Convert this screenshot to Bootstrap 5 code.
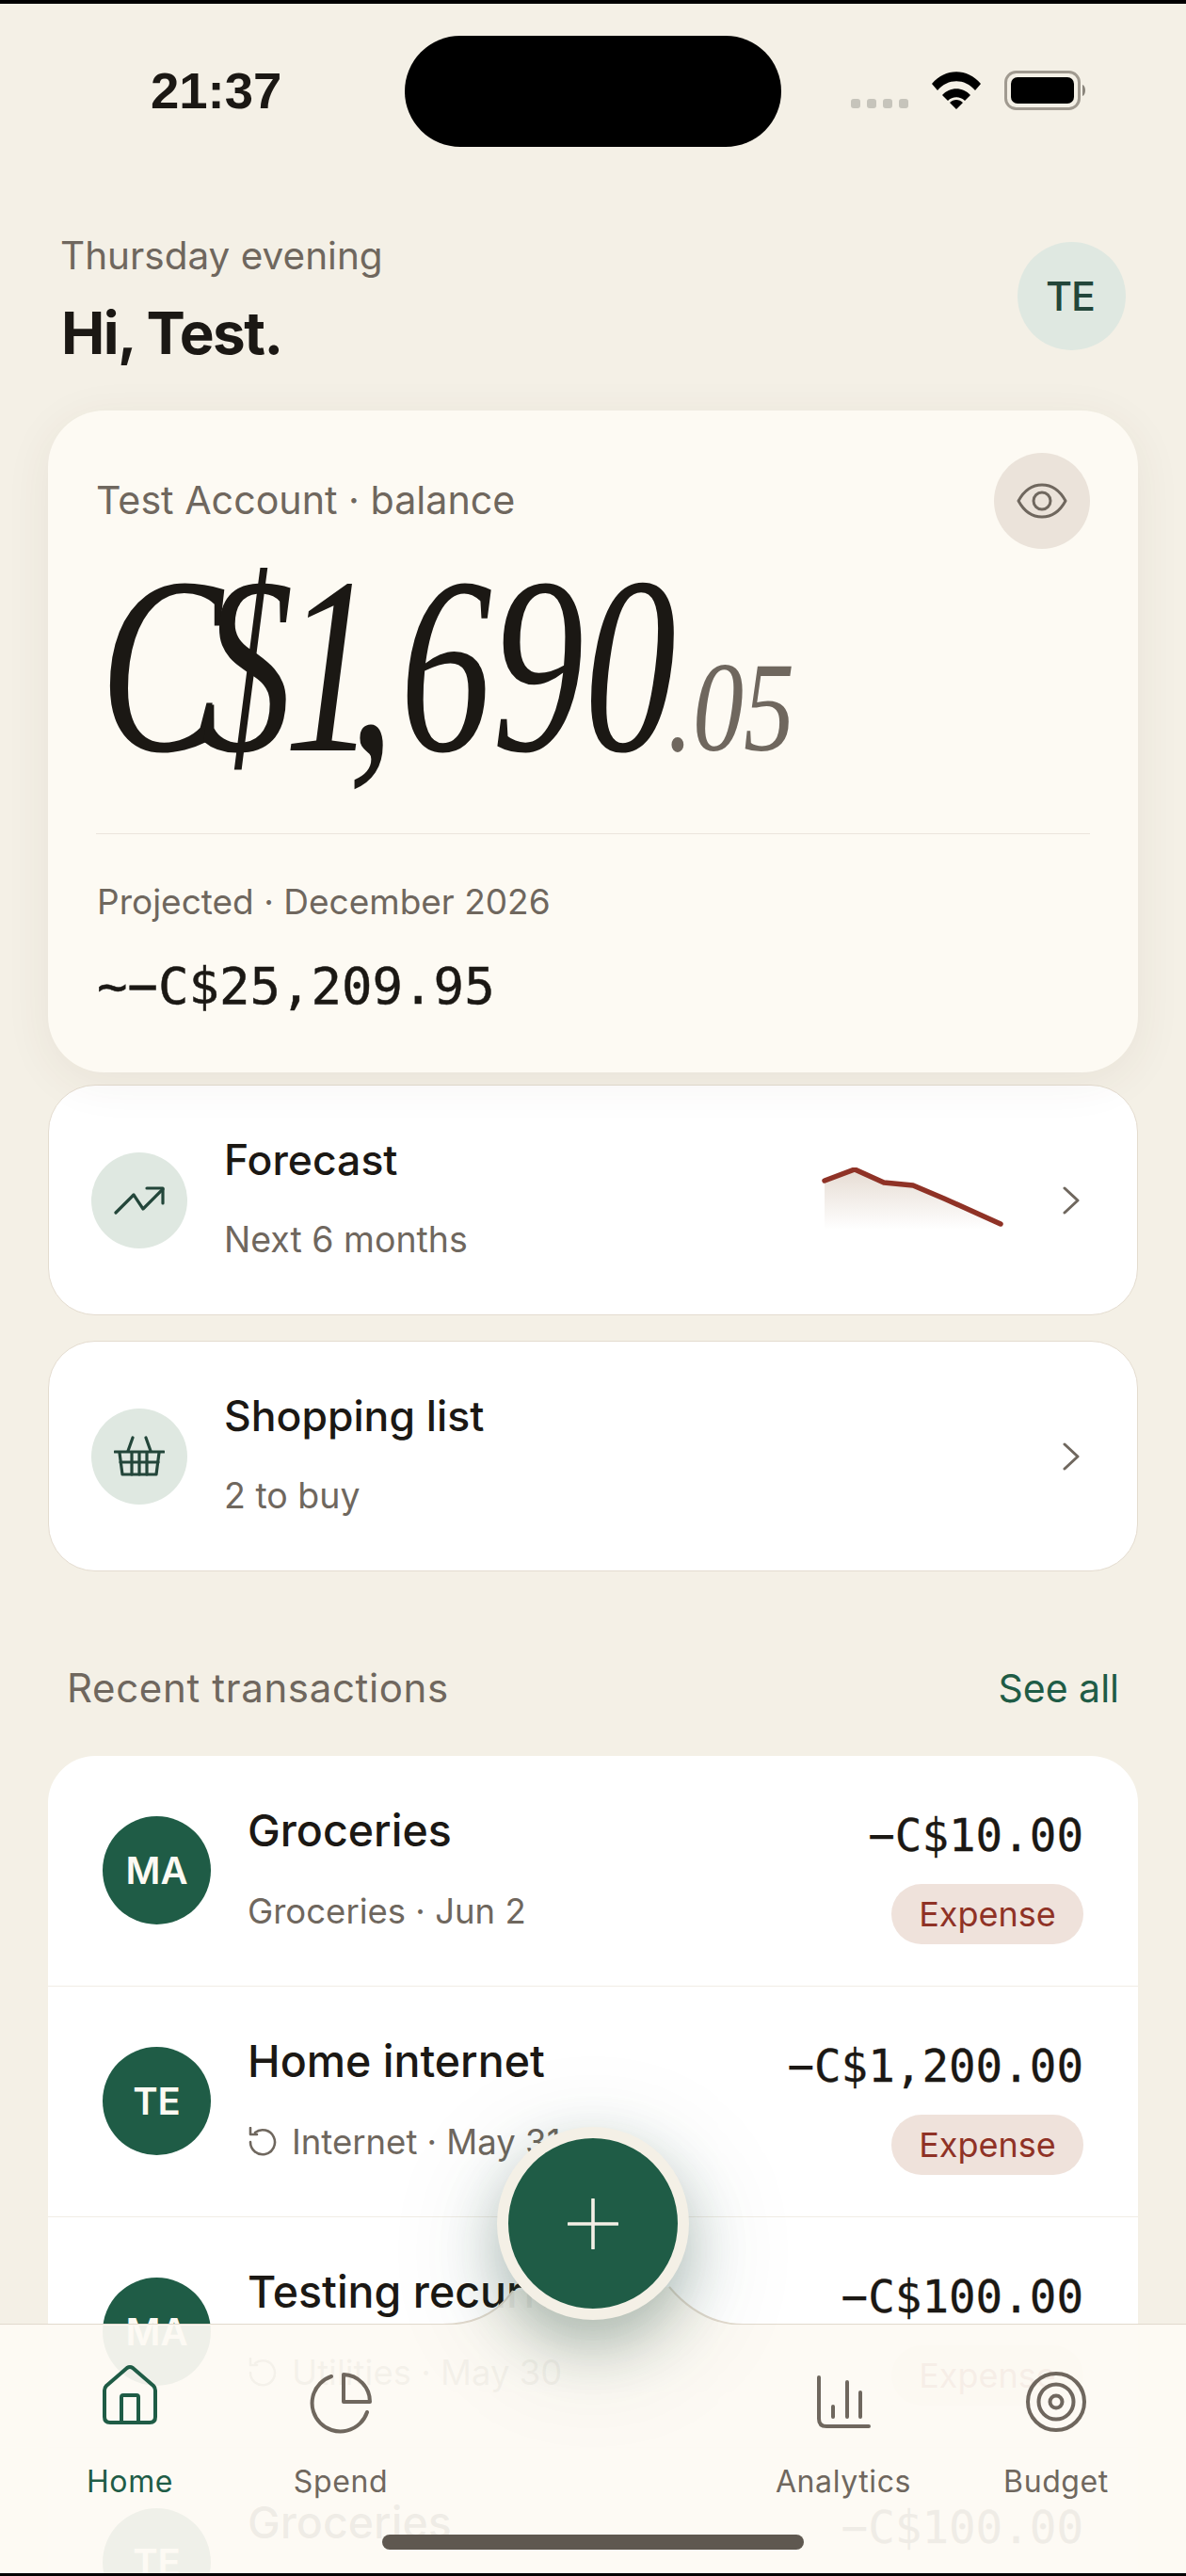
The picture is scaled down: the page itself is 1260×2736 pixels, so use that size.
<!DOCTYPE html>
<html lang="en">
<head>
<meta charset="UTF-8">
<meta name="viewport" content="width=device-width, initial-scale=1.0">
<title>Home</title>
<link href="https://cdn.jsdelivr.net/npm/bootstrap@5.3.0/dist/css/bootstrap.min.css" rel="stylesheet">
<style>
html, body { margin: 0; height: 2736px; overflow: hidden; }
body { background: #f4f0e6; color: #1b1814; font-family: Inter, "Liberation Sans", sans-serif; }
.phone { position: relative; width: 1260px; height: 2736px; overflow: hidden; border-top: 4px solid #000; border-bottom: 3px solid #000; }
.status-row { height: 152px; padding: 34px 105px 0 160px; }
.clock { width: 270px; font: 700 54.5px/1 "Liberation Sans", sans-serif; padding-top: 32px; }
.island { width: 400px; height: 118px; background: #000; border-radius: 59px; }
.status-icons { margin-left: 74px; padding-top: 37px; gap: 24px; }
.sig-dots { gap: 7px; padding-top: 30px; }
.sig-dots i { width: 10px; height: 10px; border-radius: 3px; background: #c6c4bb; display: block; }
.head-row { padding: 101px 64px 0 64px; height: 280px; }
.day-part { font-size: 40.5px; line-height: 46px; color: #6f675e; margin-top: -8px; }
.hello { font-size: 62px; font-weight: 700; line-height: 72px; margin: 23px 0 0 1px; letter-spacing: -1.5px; }
.me-circle { width: 115px; height: 115px; border-radius: 50%; background: #dfe8e1; color: #23463a; font-size: 43px; font-weight: 500; letter-spacing: -1px; padding-right: 3px; }
.sheet { margin: 0 51px; }
.hero { height: 703px; background: #fdfaf3; border: 0; border-radius: 60px; padding: 45px 51px 0 51px; box-shadow: 0 10px 50px rgba(80, 60, 40, .07); }
.hero-label { font-size: 41.2px; line-height: 46px; color: #6f675e; padding-top: 27px; }
.eye-btn { width: 102px; height: 102px; border-radius: 50%; background: #ebe3da; }
.big-num { height: 302px; font-family: "Liberation Serif", serif; font-style: italic; white-space: nowrap; }
.big-num > span { display: inline-block; transform-origin: 0 0; }
.big-whole { font-size: 268px; line-height: 248px; transform: scaleX(.73); width: 0; margin-left: 4px; }
.kern-c { letter-spacing: -31px; }
.kern-d { letter-spacing: -14px; }
.kern-o { letter-spacing: -40px; }
.kern-m { letter-spacing: 8px; }
.big-cents { font-size: 135px; line-height: 248px; color: #6f675e; transform: scaleX(.8); margin-left: 603px; }
.hero-rule { height: 1px; background: #ebe5dc; }
.proj-label { font-size: 37px; line-height: 44px; color: #6f675e; margin-top: 50px; margin-left: 1px; }
.proj-num { font: 400 54px/60px "DejaVu Sans Mono", monospace; margin-top: 38px; margin-left: 1px; -webkit-text-stroke: .5px #1b1814; }
.link-tile { height: 245px; background: #fff; border: 1px solid #e4dccf; border-radius: 50px; padding: 0 61px 0 45px; }
.tile-one { margin-top: 13px; }
.tile-two { margin-top: 27px; }
.tile-icon { width: 102px; height: 102px; border-radius: 50%; background: #dfe8e1; flex: none; }
.tile-text { margin-left: 39px; padding-bottom: 3px; }
.tile-name { font-size: 44.5px; font-weight: 500; line-height: 50px; }
.tile-sub { font-size: 37.5px; line-height: 44px; color: #6f675e; margin-top: 37.5px; }
.spark-gap { margin-right: 57px; }
.recent-head { padding: 101px 20px 0 20px; height: 196px; font-size: 42px; line-height: 46px; color: #6f675e; letter-spacing: .65px; }
.see-link { color: #1f5c46; text-decoration: none; font-size: 41px; letter-spacing: 0; }
.tx-card { background: #fff; border-radius: 50px 50px 0 0; }
.tx-row { height: 245px; padding: 64px 58px 0 58px; border-bottom: 1px solid #f1ede5; }
.tx-avatar { width: 115px; height: 115px; border-radius: 50%; background: #1f5c46; color: #fdfaf3; font-size: 40px; font-weight: 600; flex: none; margin-right: 39px; }
.tx-name { font-size: 46.5px; font-weight: 500; line-height: 52px; margin-top: -11px; }
.tx-sub { font-size: 36.5px; line-height: 44px; color: #6f675e; margin-top: 38px; gap: 15px; }
.tx-amt { font: 400 47.5px/56px "DejaVu Sans Mono", monospace; margin-top: -7px; -webkit-text-stroke: .3px #1b1814; }
.tx-tag { height: 64px; width: 204px; border-radius: 32px; background: #efe2db; color: #8f3226; font-size: 36px; margin-top: 23px; }
.bottom-bar { position: absolute; left: 0; right: 0; top: 2465px; bottom: 0; background: rgba(253, 250, 243, .94); }
.bar-edge { position: absolute; left: 0; top: 2415px; }
.nav-item-x { position: absolute; top: 38px; width: 160px; font-size: 32px; line-height: 40px; color: #6f675e; letter-spacing: .6px; }
.nav-item-x svg { height: 72px; width: 72px; display: block; margin-bottom: 37px; overflow: visible; }
.nav-on { color: #1f5c46; }
.add-btn { position: absolute; left: 528px; top: 2255px; width: 204px; height: 205px; border-radius: 50%; background: #1f5c46; border: 12px solid #f4f0e6; box-shadow: 0 26px 60px rgba(31, 70, 55, .3), 0 30px 130px rgba(31, 70, 55, .14); padding: 0; }
.home-pill { position: absolute; left: 406px; top: 2688px; width: 448px; height: 16px; border-radius: 8px; background: #5f5850; }
</style>
</head>
<body>
<div class="phone">
  <div class="status-row d-flex">
    <div class="clock">21:37</div>
    <div class="island"></div>
    <div class="status-icons d-flex">
      <div class="sig-dots d-flex"><i></i><i></i><i></i><i></i></div>
      <svg width="54" height="41" viewBox="0 0 54 41"><path d="M1 14C15 -3 39 -3 53 14L47 21C36 8 18 8 7 21Z M12 26C20 17 34 17 42 26L36 32C31 27 23 27 18 32Z M20 34C24 30 30 30 34 34L27 41Z" fill="#000"/></svg>
      <svg width="88" height="42" viewBox="0 0 88 42"><rect x="1.5" y="1.5" width="78" height="39" rx="11" fill="none" stroke="#a09a90" stroke-width="3"/><rect x="7" y="7" width="67" height="28" rx="7" fill="#000"/><path d="M83 15C87 16 87 26 83 27Z" fill="#8a857c"/></svg>
    </div>
  </div>

  <div class="head-row d-flex justify-content-between">
    <div>
      <div class="day-part">Thursday evening</div>
      <h1 class="hello">Hi, Test.</h1>
    </div>
    <div class="me-circle d-flex align-items-center justify-content-center">TE</div>
  </div>

  <div class="sheet">
    <div class="card hero">
      <div class="d-flex justify-content-between">
        <div class="hero-label">Test Account · balance</div>
        <div class="eye-btn d-flex align-items-center justify-content-center">
          <svg width="54" height="38" viewBox="0 0 54 38" fill="none" stroke="#6f675e" stroke-width="3"><path d="M2 19C8 8 17 2 27 2S46 8 52 19C46 30 37 36 27 36S8 30 2 19Z" stroke-linejoin="round"/><circle cx="27" cy="19" r="9"/></svg>
        </div>
      </div>
      <div class="big-num"><span class="big-whole"><span class="kern-c">C</span><span class="kern-d">$</span><span class="kern-o">1</span><span class="kern-m">,</span>690</span><span class="big-cents">.05</span></div>
      <div class="hero-rule"></div>
      <div class="proj-label">Projected · December 2026</div>
      <div class="proj-num">~−C$25,209.95</div>
    </div>

    <div class="link-tile tile-one d-flex align-items-center">
      <div class="tile-icon d-flex align-items-center justify-content-center">
        <svg width="54" height="30" viewBox="0 0 54 30" fill="none" stroke="#23463a" stroke-width="3.2" stroke-linecap="round" stroke-linejoin="round"><path d="M2 28L21 9L31 24L52 3"/><path d="M35 2H52V18"/></svg>
      </div>
      <div class="tile-text flex-grow-1">
        <div class="tile-name">Forecast</div>
        <div class="tile-sub">Next 6 months</div>
      </div>
      <svg width="200" height="70" viewBox="0 0 200 70" class="spark-gap">
        <defs><linearGradient id="sparkFill" x1="0" y1="0" x2="0" y2="1"><stop offset="0" stop-color="#e6dcd3"/><stop offset="1" stop-color="#fff"/></linearGradient></defs>
        <path d="M4 14L36 2L67 16L98 19L131 33L160 46L191 60V66H4Z" fill="url(#sparkFill)"/>
        <path d="M4 14L36 2L67 16L98 19L131 33L160 46L191 60" fill="none" stroke="#8f3226" stroke-width="5.5" stroke-linecap="round" stroke-linejoin="round"/>
      </svg>
      <svg width="18" height="30" viewBox="0 0 18 30" fill="none" stroke="#6f675e" stroke-width="3" stroke-linecap="round" stroke-linejoin="round"><path d="M2 2L16 15L2 28"/></svg>
    </div>

    <div class="link-tile tile-two d-flex align-items-center">
      <div class="tile-icon d-flex align-items-center justify-content-center">
        <svg width="54" height="44" viewBox="0 0 54 44" fill="none" stroke="#23463a" stroke-width="3.2" stroke-linecap="round" stroke-linejoin="round"><path d="M1 17H53"/><path d="M15 16L20 2M39 16L34 2"/><path d="M6 18L9 41H45L48 18"/><path d="M7 28H47M19 18V41M27 18V41M35 18V41"/></svg>
      </div>
      <div class="tile-text flex-grow-1">
        <div class="tile-name">Shopping list</div>
        <div class="tile-sub">2 to buy</div>
      </div>
      <svg width="18" height="30" viewBox="0 0 18 30" fill="none" stroke="#6f675e" stroke-width="3" stroke-linecap="round" stroke-linejoin="round"><path d="M2 2L16 15L2 28"/></svg>
    </div>

    <div class="recent-head d-flex justify-content-between">
      <span>Recent transactions</span><a class="see-link" href="#">See all</a>
    </div>

    <div class="tx-card">
      <div class="tx-row d-flex">
        <div class="tx-avatar d-flex align-items-center justify-content-center">MA</div>
        <div class="flex-grow-1">
          <div class="tx-name">Groceries</div>
          <div class="tx-sub d-flex align-items-center">Groceries · Jun 2</div>
        </div>
        <div class="d-flex flex-column align-items-end">
          <div class="tx-amt">−C$10.00</div>
          <div class="tx-tag d-flex align-items-center justify-content-center">Expense</div>
        </div>
      </div>
      <div class="tx-row d-flex">
        <div class="tx-avatar d-flex align-items-center justify-content-center">TE</div>
        <div class="flex-grow-1">
          <div class="tx-name">Home internet</div>
          <div class="tx-sub d-flex align-items-center"><svg width="32" height="32" viewBox="0 0 32 32" fill="none" stroke="#6f675e" stroke-width="2.6" stroke-linecap="round" stroke-linejoin="round"><path d="M8 6A13 13 0 1 1 3 16"/><path d="M3 3V10H10" transform="translate(0 -2)"/></svg>Internet · May 31</div>
        </div>
        <div class="d-flex flex-column align-items-end">
          <div class="tx-amt">−C$1,200.00</div>
          <div class="tx-tag d-flex align-items-center justify-content-center">Expense</div>
        </div>
      </div>
      <div class="tx-row d-flex">
        <div class="tx-avatar d-flex align-items-center justify-content-center">MA</div>
        <div class="flex-grow-1">
          <div class="tx-name">Testing recurring</div>
          <div class="tx-sub d-flex align-items-center"><svg width="32" height="32" viewBox="0 0 32 32" fill="none" stroke="#6f675e" stroke-width="2.6" stroke-linecap="round" stroke-linejoin="round"><path d="M8 6A13 13 0 1 1 3 16"/><path d="M3 3V10H10" transform="translate(0 -2)"/></svg>Utilities · May 30</div>
        </div>
        <div class="d-flex flex-column align-items-end">
          <div class="tx-amt">−C$100.00</div>
          <div class="tx-tag d-flex align-items-center justify-content-center">Expense</div>
        </div>
      </div>
      <div class="tx-row d-flex">
        <div class="tx-avatar d-flex align-items-center justify-content-center">TE</div>
        <div class="flex-grow-1">
          <div class="tx-name">Groceries</div>
        </div>
        <div class="d-flex flex-column align-items-end">
          <div class="tx-amt">−C$100.00</div>
        </div>
      </div>
    </div>
  </div>

  <svg class="bar-edge" width="1260" height="52" viewBox="0 0 1260 52">
    <path d="M470 50Q520 50 545 14L711 10Q745 50 790 50Z" fill="#fdfaf3" fill-opacity=".94"/>
    <path d="M0 50H470Q520 50 545 14M711 10Q745 50 790 50H1260" fill="none" stroke="#e2dace" stroke-width="2"/>
  </svg>
  <div class="bottom-bar">
    <a class="nav-item-x nav-on text-center text-decoration-none" style="left:58px">
      <svg class="mx-auto" viewBox="0 0 72 72" fill="none" stroke="currentColor" stroke-width="4" stroke-linejoin="round"><path d="M9 32Q9 29 11 27L33 8Q36 6 39 8L61 27Q63 29 63 32V60Q63 66 57 66H15Q9 66 9 60Z"/><path d="M27 66V39Q27 37 29 37H43Q45 37 45 39V66"/></svg>
      Home
    </a>
    <a class="nav-item-x text-center text-decoration-none" style="left:282px">
      <svg class="mx-auto" viewBox="0 0 72 72" fill="none" stroke="currentColor" stroke-width="4" stroke-linecap="round" stroke-linejoin="round"><path d="M26 17A30 30 0 1 0 64 55"/><path d="M39 15A29 29 0 0 1 67 44H39Z"/></svg>
      Spend
    </a>
    <a class="nav-item-x text-center text-decoration-none" style="left:816px">
      <svg class="mx-auto" viewBox="0 0 72 72" fill="none" stroke="currentColor" stroke-width="4" stroke-linecap="round" stroke-linejoin="round"><path d="M10 18V62Q10 70 18 70H63"/><path d="M25 49V60M40 23V60M54 34V60"/></svg>
      Analytics
    </a>
    <a class="nav-item-x text-center text-decoration-none" style="left:1042px">
      <svg class="mx-auto" viewBox="0 0 72 72" fill="none" stroke="currentColor" stroke-width="4"><circle cx="36" cy="44" r="30"/><circle cx="36" cy="44" r="18.5"/><circle cx="36" cy="44" r="6.5"/></svg>
      Budget
    </a>
  </div>
  <button class="add-btn btn d-flex align-items-center justify-content-center" type="button" aria-label="Add">
    <svg width="54" height="54" viewBox="0 0 54 54" stroke="#f4f0e6" stroke-width="3.6" stroke-linecap="round"><path d="M27 1V53M1 27H53"/></svg>
  </button>
  <div class="home-pill"></div>
</div>
</body>
</html>
